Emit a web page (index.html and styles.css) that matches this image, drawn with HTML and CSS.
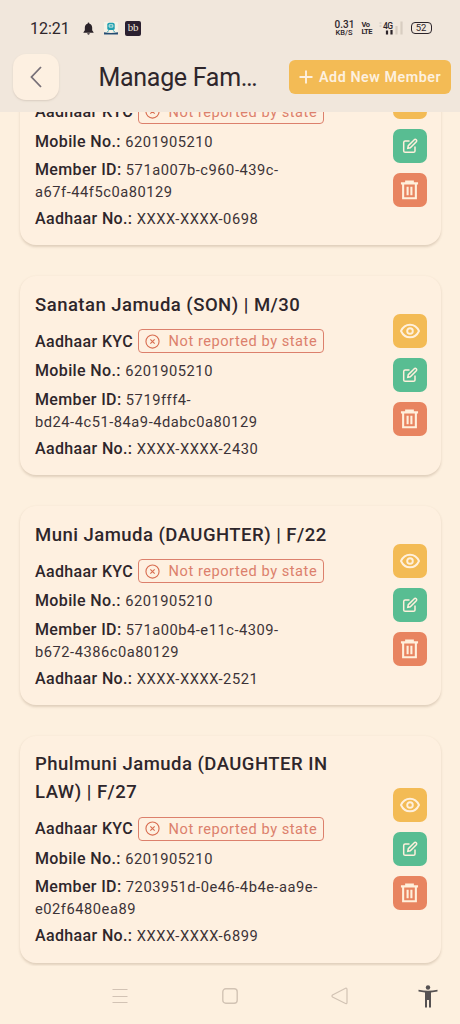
FILE: index.html
```html
<!DOCTYPE html>
<html lang="en">
<head>
<meta charset="utf-8">
<title>Manage Family</title>
<link rel="stylesheet" href="styles.css">
</head>
<body>
<svg class="sprite" aria-hidden="true">
  <symbol id="eye" viewBox="0 0 20 16"><path d="M1 8C3 3.600 6.200 1.700 10 1.700S17 3.600 19 8c-2 4.400-5.200 6.300-9 6.300S3 12.400 1 8z"/><circle cx="10" cy="8" r="2.800"/></symbol>
  <symbol id="edit" viewBox="0 0 16 16"><path d="M7.500 3H3.200Q1.700 3 1.700 4.500V13Q1.700 14.300 3.200 14.300H11.500Q13 14.300 13 13V8.500M5.800 10.300l.5-2.600 6-6q1-.8 1.900.1t.1 1.900l-6 6z"/></symbol>
  <symbol id="trash" viewBox="0 0 20 20"><path d="M1 3H19M6.500 2V1.200H13.500V2M3.300 3V18.600H16.700V3M8 6.500V15.500M12 6.500V15.500"/></symbol>
  <symbol id="cross" viewBox="0 0 16 16"><circle cx="8" cy="8" r="7"/><path d="M5.700 5.700l4.600 4.600M10.300 5.700l-4.600 4.600"/></symbol>
</svg>
<div class="screen">
  <header class="top">
    <div class="status">
      <span class="clock">12:21</span>
      <svg class="bell" viewBox="0 0 12 14"><path d="M6 .5q1 0 1 1.200C9.200 2.300 10 4 10 6v3l1.500 2v.6H.5V11L2 9V6c0-2 .8-3.700 3-4.300Q5 .5 6 .5zM4.500 12.300h3Q7.200 13.700 6 13.700t-1.500-1.400z"/></svg>
      <svg class="train" viewBox="0 0 15 14"><rect width="15" height="14" fill="#f5f2e6"/><rect x="3.500" y=".7" width="8" height="8" rx="2" fill="#20a0b0"/><path d="M5.500 3h4v2.500h-4z" stroke="#d8eee8"/><path d="M5 9l-1.500 2M10 9l1.500 2" stroke="#20a0b0"/><path d="M0 11q7.500 1.500 15 0v2.500H0z" fill="#244b72"/></svg>
      <span class="app">bb</span>
      <span class="gap"></span>
      <span class="speed"><b>0.31</b><i>KB/S</i></span>
      <span class="volte"><b>Vo</b><b>LTE</b></span>
      <svg class="signal" viewBox="0 0 26 14"><path d="M1.500 2h2M1.500 5h2" stroke="#c8c0b8"/><text x="5" y="7.500">4G</text><path d="M9 9.500V13.500M13.500 9V13.500" stroke="#2b2329" stroke-width="2.200"/><path d="M18.500 5V13.500M23.500 .5V13.500" stroke="#d8cdc1" stroke-width="2.200"/></svg>
      <span class="battery">52</span>
    </div>
    <div class="bar">
      <div class="back"><svg viewBox="0 0 12 22"><path d="M11 1L1.500 11L11 21"/></svg></div>
      <h1>Manage Fam…</h1>
      <div class="add"><svg viewBox="0 0 14 14"><path d="M7 .5v13M.5 7h13"/></svg><span>Add New Member</span></div>
    </div>
  </header>
  <main class="list">
    <section class="card">
      <div class="info">
        <h2></h2>
        <div class="kyc"><b>Aadhaar KYC</b><span class="badge"><svg><use href="#cross"/></svg><span>Not reported by state</span></span></div>
        <p><b>Mobile No.:</b> <span>6201905210</span></p>
        <p><b>Member ID:</b> <span>571a007b-c960-439c-<br>a67f-44f5c0a80129</span></p>
        <p><b>Aadhaar No.:</b> <span>XXXX-XXXX-0698</span></p>
      </div>
      <div class="actions"><span class="btn view"><svg><use href="#eye"/></svg></span><span class="btn edit"><svg><use href="#edit"/></svg></span><span class="btn del"><svg><use href="#trash"/></svg></span></div>
    </section>
    <section class="card">
      <div class="info">
        <h2>Sanatan Jamuda (SON) | M/30</h2>
        <div class="kyc"><b>Aadhaar KYC</b><span class="badge"><svg><use href="#cross"/></svg><span>Not reported by state</span></span></div>
        <p><b>Mobile No.:</b> <span>6201905210</span></p>
        <p><b>Member ID:</b> <span>5719fff4-<br>bd24-4c51-84a9-4dabc0a80129</span></p>
        <p><b>Aadhaar No.:</b> <span>XXXX-XXXX-2430</span></p>
      </div>
      <div class="actions"><span class="btn view"><svg><use href="#eye"/></svg></span><span class="btn edit"><svg><use href="#edit"/></svg></span><span class="btn del"><svg><use href="#trash"/></svg></span></div>
    </section>
    <section class="card">
      <div class="info">
        <h2>Muni Jamuda (DAUGHTER) | F/22</h2>
        <div class="kyc"><b>Aadhaar KYC</b><span class="badge"><svg><use href="#cross"/></svg><span>Not reported by state</span></span></div>
        <p><b>Mobile No.:</b> <span>6201905210</span></p>
        <p><b>Member ID:</b> <span>571a00b4-e11c-4309-<br>b672-4386c0a80129</span></p>
        <p><b>Aadhaar No.:</b> <span>XXXX-XXXX-2521</span></p>
      </div>
      <div class="actions"><span class="btn view"><svg><use href="#eye"/></svg></span><span class="btn edit"><svg><use href="#edit"/></svg></span><span class="btn del"><svg><use href="#trash"/></svg></span></div>
    </section>
    <section class="card">
      <div class="info">
        <h2>Phulmuni Jamuda (DAUGHTER IN<br>LAW) | F/27</h2>
        <div class="kyc"><b>Aadhaar KYC</b><span class="badge"><svg><use href="#cross"/></svg><span>Not reported by state</span></span></div>
        <p><b>Mobile No.:</b> <span>6201905210</span></p>
        <p><b>Member ID:</b> <span>7203951d-0e46-4b4e-aa9e-<br>e02f6480ea89</span></p>
        <p><b>Aadhaar No.:</b> <span>XXXX-XXXX-6899</span></p>
      </div>
      <div class="actions"><span class="btn view"><svg><use href="#eye"/></svg></span><span class="btn edit"><svg><use href="#edit"/></svg></span><span class="btn del"><svg><use href="#trash"/></svg></span></div>
    </section>
  </main>
  <nav class="nav">
    <svg class="recent" viewBox="0 0 16 16"><path d="M.5 1.500h15M.5 8.500h15M.5 14.500h15"/></svg>
    <svg class="home" viewBox="0 0 16 16"><rect x=".8" y=".8" width="14.400" height="14.400" rx="3"/></svg>
    <svg class="prev" viewBox="0 0 17 18"><path d="M15 1Q16 1 16 2.500v13q0 1.500-1.500 1L1.500 10Q.5 9 1.500 8z"/></svg>
    <svg class="person" viewBox="0 0 20 23"><circle cx="10" cy="2.500" r="2.200"/><path d="M.5 4.700Q10 7 19.500 4.700V6.600L13 7.600V22.500H11V15H9v7.500H7V7.600L.5 6.600z"/></svg>
  </nav>
</div>
</body>
</html>
```
FILE: styles.css
```css
* { box-sizing: border-box; }
body { margin: 0; font-family: Roboto, "Liberation Sans", sans-serif; color: #2e262b; }
b { font-weight: 500; }
.sprite { display: none; }
.screen { width: 460px; height: 1024px; display: flex; flex-direction: column; background: #fdf0df; overflow: hidden; }
.top { height: 112px; flex: none; background: #f1e7dc; }
.status { height: 54px; padding: 2px 28.500px 0 30px; display: flex; align-items: center; }
.clock { width: 53px; font-size: 16px; }
.bell { width: 11px; height: 13px; margin-right: 10px; fill: #2b2329; }
.train { width: 14px; height: 13px; margin-right: 7px; fill: none; }
.app { width: 16px; height: 15px; border-radius: 2px; background: #2b2030; color: #f1e7dc; font: 11px/13px "Liberation Serif", serif; letter-spacing: -.3px; text-align: center; }
.gap { flex: 1; }
.speed { width: 27px; display: flex; flex-direction: column; align-items: flex-start; }
.speed b { font-size: 10px; line-height: 9px; }
.speed i { font: 500 7.500px/8px Roboto, sans-serif; margin-left: 1px; }
.volte { width: 16px; display: flex; flex-direction: column; font-size: 7.500px; line-height: 7.500px; }
.volte b { font-weight: 700; letter-spacing: -.6px; }
.signal { width: 26px; height: 14px; margin-right: 7px; fill: none; }
.signal text { font: 500 8.500px Roboto, sans-serif; fill: #2b2329; letter-spacing: -.6px; }
.battery { width: 21px; height: 12px; border: 1.500px solid #2b2329; border-radius: 4px; font-size: 9.500px; line-height: 10px; text-align: center; }
.bar { height: 46px; padding: 0 9px 0 13px; display: flex; align-items: center; }
.back { width: 46px; height: 46px; flex: none; border-radius: 13px; background: #fdf0e1; box-shadow: 0 1px 2px #d8ccbf; display: flex; align-items: center; justify-content: center; }
.back svg { width: 12px; height: 22px; fill: none; stroke: #777078; stroke-width: 1.800; }
h1 { width: 170px; flex: none; margin: 2px 0 0 39.500px; font-size: 25px; font-weight: 400; line-height: 30px; letter-spacing: -.3px; white-space: nowrap; }
.add { width: 162px; height: 34px; margin-left: auto; flex: none; border-radius: 6px; background: #f3bb55; color: #fdf0df; display: flex; align-items: center; padding-left: 10px; gap: 6px; font-size: 14.300px; font-weight: 600; letter-spacing: .55px; white-space: nowrap; }
.add svg { width: 14px; height: 14px; flex: none; stroke: #fdf0df; stroke-width: 1.900; }
.list { flex: 1; min-height: 0; overflow: hidden; padding: 0 19px 0 20px; display: flex; flex-direction: column; gap: 31px; }
.card { flex: none; display: flex; justify-content: space-between; padding: 14px 14.500px 15.750px 15px; border-radius: 16px; background: #fef0e0; box-shadow: 0 1.500px 2.500px rgba(112, 82, 52, .2); }
.card:first-child { margin-top: -65.500px; }
h2 { min-height: 28px; margin: 0 0 11px; font-size: 18.500px; font-weight: 500; line-height: 28px; letter-spacing: .48px; white-space: nowrap; position: relative; top: .5px; }
.kyc { height: 24px; display: flex; align-items: center; gap: 4.500px; margin-bottom: 7px; font-size: 16px; letter-spacing: .36px; white-space: nowrap; }
.badge { width: 186px; height: 24px; border: 1px solid #dc806c; border-radius: 4px; display: flex; align-items: center; gap: 9px; padding-left: 6px; color: #dc806c; font-size: 14.600px; letter-spacing: .54px; }
.badge svg { width: 15px; height: 15px; fill: none; stroke: #d86c50; stroke-width: 1.200; }
p { margin: 0 0 6.500px; font-size: 16px; line-height: 22px; letter-spacing: .36px; white-space: nowrap; }
p span { font-size: 14.700px; line-height: 18px; letter-spacing: .52px; color: #3c3337; }
p:nth-of-type(2) { margin-bottom: 5px; }
p:last-child { margin: 0 0 -.5px; }
.actions { display: flex; flex-direction: column; justify-content: center; gap: 10px; padding-top: 1px; }
.btn { width: 34px; height: 34px; border-radius: 7px; display: flex; align-items: center; justify-content: center; }
.btn svg { fill: none; stroke: #fff0dc; }
.view { background: #f3bb55; }
.view svg { width: 20px; height: 16px; stroke-width: 1.900; }
.edit { background: #58bd92; }
.edit svg { width: 16px; height: 16px; stroke-width: 1.500; }
.del { background: #e88460; }
.del svg { width: 19px; height: 20px; stroke-width: 2.200; }
.nav { height: 58px; flex: none; display: flex; align-items: center; padding: 2px 22px 0 112px; fill: none; stroke: #d2c3b4; }
.nav svg { flex: none; }
.recent { width: 16px; height: 16px; }
.home { width: 16px; height: 16px; margin-left: 94px; stroke-width: 1.400; }
.prev { width: 17px; height: 18px; margin-left: 93px; stroke-width: 1.200; }
.person { width: 20px; height: 23px; margin-left: auto; fill: #555152; stroke: none; }
```
